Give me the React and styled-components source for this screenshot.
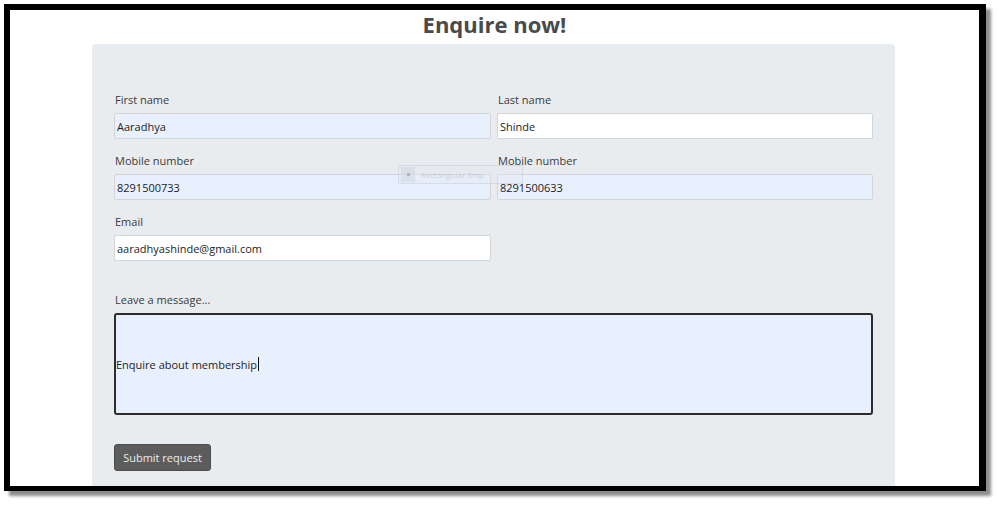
import React from "react";
import styled, { createGlobalStyle } from "styled-components";

const Global = createGlobalStyle`
  html, body { margin: 0; padding: 0; background: #ffffff; }
  body { font-family: "Open Sans", "Noto Sans", sans-serif; }
  * { box-sizing: border-box; }
`;

const Page = styled.div`
  width: 999px;
  height: 505px;
  padding: 4px 0 0 4px;
  overflow: hidden;
`;

const Frame = styled.div`
  width: 982px;
  height: 487px;
  border-style: solid;
  border-color: #000;
  border-width: 6px 7px 5px 6px;
  box-shadow: 5px 5px 3px rgba(0, 0, 0, 0.45);
  background: #fff;
  overflow: hidden;
  position: relative;
`;

const Title = styled.h1`
  margin: 0;
  height: 34px;
  text-align: center;
  font-size: 22px;
  line-height: 29px;
  font-weight: 700;
  color: #4a4a4a;
`;

const Panel = styled.form`
  width: 803px;
  margin-left: 82px;
  min-height: 460px;
  background: #e9ecef;
  border-radius: 4px 4px 0 0;
  padding: 48px 22px 0 22px;
`;

const Grid = styled.div`
  display: grid;
  grid-template-columns: 377px 376px;
  column-gap: 6px;
  row-gap: 14px;
`;

const Field = styled.div`
  display: flex;
  flex-direction: column;
`;

const Label = styled.label`
  font-size: 11px;
  line-height: 16px;
  height: 16px;
  color: #3a3a3a;
  margin-bottom: 5px;
  padding-left: 1px;
`;

const Input = styled.input`
  height: 26px;
  width: 100%;
  border: 1px solid #d3d6d9;
  border-radius: 2px;
  padding: 0 2px;
  font-family: inherit;
  font-size: 11px;
  color: #1d1d1d;
  background: ${(p) => (p.$filled ? "#e8f0fe" : "#ffffff")};
  outline: none;
`;

const MessageField = styled(Field)`
  margin-top: 31px;
`;

const MessageBox = styled.div`
  height: 102px;
  width: 100%;
  border: 2px solid #2c2c2c;
  border-radius: 3px;
  background: #e8f0fe;
  display: flex;
  align-items: center;
  font-size: 11px;
  color: #1d1d1d;
  padding-left: 0;
`;

const Caret = styled.span`
  display: inline-block;
  width: 1px;
  height: 14px;
  background: #111;
  margin-left: 1px;
`;

const Button = styled.button`
  margin-top: 29px;
  width: 97px;
  height: 27px;
  border: 1px solid #4d4d4d;
  border-radius: 3px;
  background: #5c5c5c;
  color: #ececec;
  font-family: inherit;
  font-size: 11px;
  padding: 0;
`;

const Ghost = styled.div`
  position: absolute;
  left: 388px;
  top: 155px;
  width: 125px;
  height: 19px;
  border: 1px solid rgba(180, 190, 205, 0.35);
  background: rgba(225, 232, 242, 0.35);
  display: flex;
  align-items: center;
  gap: 6px;
  font-size: 8px;
  color: rgba(120, 130, 140, 0.3);
  padding-left: 2px;
`;

const GhostIcon = styled.span`
  width: 14px;
  height: 15px;
  background: rgba(200, 210, 225, 0.45);
  display: flex;
  align-items: center;
  justify-content: center;
  &::after {
    content: "";
    width: 3px;
    height: 3px;
    background: rgba(120, 130, 140, 0.4);
  }
`;

export default function App() {
  return (
    <Page>
      <Global />
      <Frame>
        <Title>Enquire now!</Title>
        <Panel onSubmit={(e) => e.preventDefault()}>
          <Grid>
            <Field>
              <Label>First name</Label>
              <Input $filled defaultValue="Aaradhya" />
            </Field>
            <Field>
              <Label>Last name</Label>
              <Input defaultValue="Shinde" />
            </Field>
            <Field>
              <Label>Mobile number</Label>
              <Input $filled defaultValue="8291500733" />
            </Field>
            <Field>
              <Label>Mobile number</Label>
              <Input $filled defaultValue="8291500633" />
            </Field>
            <Field>
              <Label>Email</Label>
              <Input defaultValue="aaradhyashinde@gmail.com" />
            </Field>
          </Grid>
          <MessageField>
            <Label>Leave a message...</Label>
            <MessageBox role="textbox">
              Enquire about membership
              <Caret />
            </MessageBox>
          </MessageField>
          <Button type="submit">Submit request</Button>
        </Panel>
        <Ghost>
          <GhostIcon />
          Rectangular Snip
        </Ghost>
      </Frame>
    </Page>
  );
}
